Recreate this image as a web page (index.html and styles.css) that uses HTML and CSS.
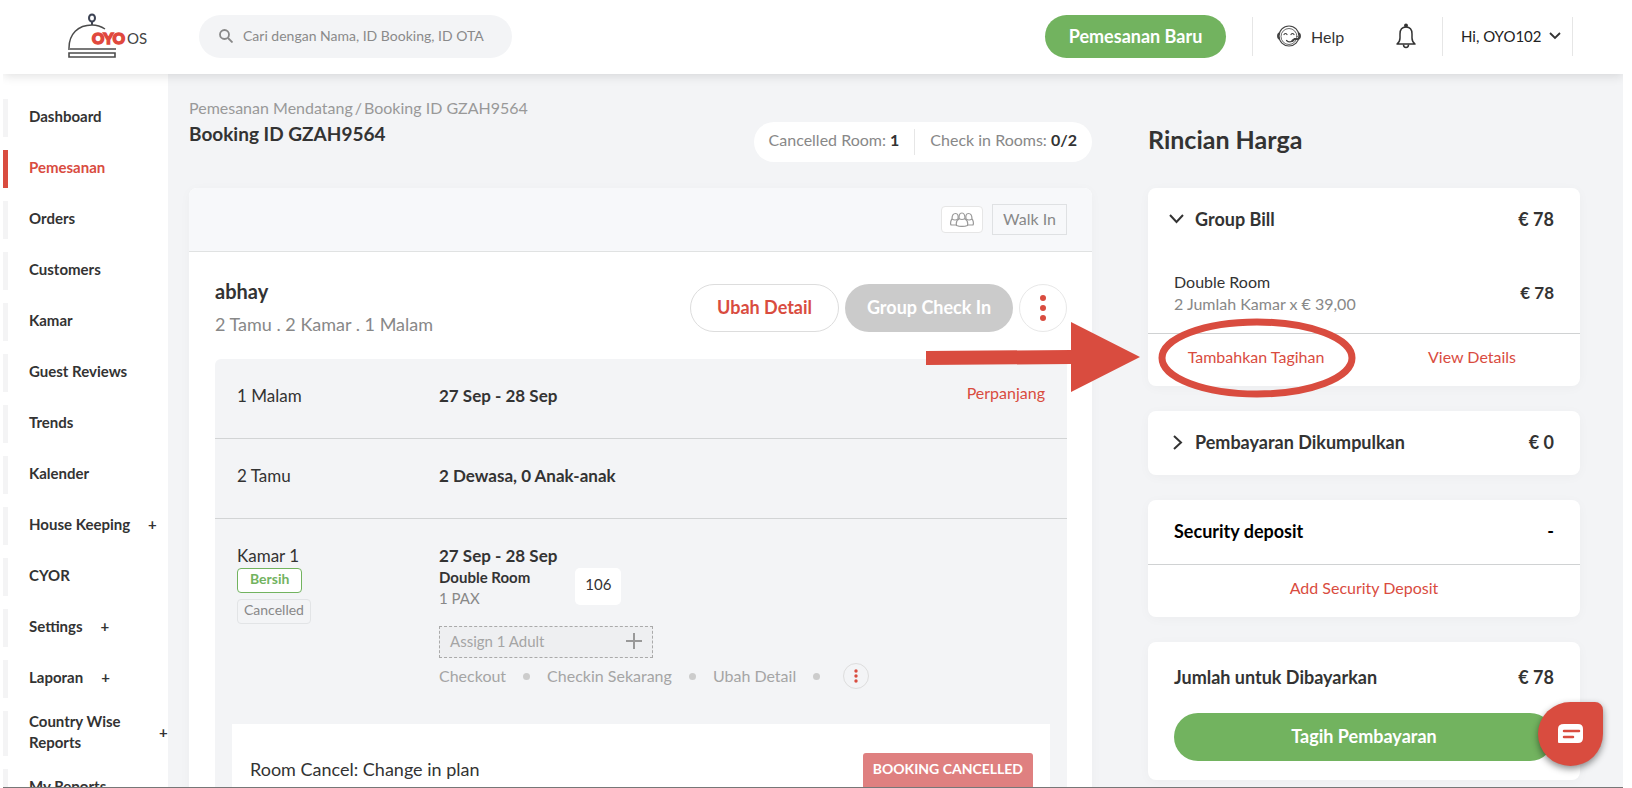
FILE: index.html
```html
<!DOCTYPE html>
<html lang="id">
<head>
  <meta charset="UTF-8" />
  <meta name="viewport" content="width=device-width, initial-scale=1" />
  <title>OYO OS - Booking ID GZAH9564</title>
  <link rel="stylesheet" href="styles.css">
</head>
<body>
  <div class="app">
    <header class="topbar">
      <a class="logo" href="#" aria-label="OYO OS">
        <svg width="84" height="48" viewBox="0 0 84 48" fill="none">
          <ellipse cx="25" cy="6" rx="3" ry="3.500" stroke="#3d4354" stroke-width="2" />
          <path d="M25 10v3" stroke="#3d4354" stroke-width="2" />
          <path d="M2 36C2 22 11 13 25 13c6 0 10 2 13 4" stroke="#4b4b4b" stroke-width="1.500" />
          <path d="M1 37h48" stroke="#4b4b4b" stroke-width="1.500" />
          <path d="M2 41h46v4H2z" stroke="#4b4b4b" stroke-width="1.600" />
          <text class="logo-oyo" x="25" y="32">OYO</text>
          <text class="logo-os" x="60" y="32">OS</text>
        </svg>
      </a>
      <form class="search">
        <svg width="14" height="14" viewBox="0 0 14 14" fill="none" stroke="#888" stroke-width="1.800">
          <circle cx="5.500" cy="5.500" r="4.500" />
          <path d="M9 9l4.500 4.500" />
        </svg>
        <input type="text" aria-label="Cari" placeholder="Cari dengan Nama, ID Booking, ID OTA" />
      </form>
      <button type="button" class="btn btn-new">Pemesanan Baru</button>
      <a class="help" href="#">
        <svg width="24" height="24" viewBox="0 0 24 24" fill="none" stroke="#444" stroke-width="1.200" stroke-linecap="round">
          <circle cx="12" cy="12" r="10" />
          <circle cx="12" cy="12.500" r="8" stroke-width=".8" />
          <path d="M2 9.500c-1.300 1-1.300 4 0 5M22 9.500c1.300 1 1.300 4 0 5" stroke-width="2" />
          <path d="M7 10.500q1.500-2 3 0M14 10.500q1.500-2 3 0" />
          <path d="M9.500 16.500c2 2 5 2 6-.5" />
          <path d="M20.500 15h-3l-2 2" stroke-width="1.800" />
        </svg>
        <span>Help</span>
      </a>
      <button type="button" class="bell" aria-label="Notifications">
        <svg width="20" height="26" viewBox="0 0 20 26" fill="none" stroke="#333" stroke-width="1.500" stroke-linejoin="round">
          <path d="M1 21c2-1.500 3-3 3-6v-4c0-4 2-7 6-7s6 3 6 7v4c0 3 1 4.500 3 6z" />
          <path d="M7.500 21.500c0 4 5 4 5 0" />
          <circle cx="10" cy="2.500" r="1.200" fill="#333" />
        </svg>
      </button>
      <button type="button" class="user">
        Hi, OYO102
        <svg width="12" height="8" viewBox="0 0 12 8" fill="none" stroke="#333" stroke-width="1.800"><path d="M1 1l5 5 5-5" /></svg>
      </button>
    </header>

    <div class="shell">
      <nav class="sidebar">
        <a href="#">Dashboard</a>
        <a href="#" class="active">Pemesanan</a>
        <a href="#">Orders</a>
        <a href="#">Customers</a>
        <a href="#">Kamar</a>
        <a href="#">Guest Reviews</a>
        <a href="#">Trends</a>
        <a href="#">Kalender</a>
        <a href="#">House Keeping <span>+</span></a>
        <a href="#">CYOR</a>
        <a href="#">Settings <span>+</span></a>
        <a href="#">Laporan <span>+</span></a>
        <a href="#"><span class="wrap">Country Wise Reports</span> <span>+</span></a>
        <a href="#">My Reports</a>
      </nav>

      <main class="content">
        <section class="booking">
          <div class="booking-head">
            <div>
              <div class="crumbs"><a href="#">Pemesanan Mendatang</a>/<span>Booking ID GZAH9564</span></div>
              <h1>Booking ID GZAH9564</h1>
            </div>
            <div class="counts">
              <span>Cancelled Room: <b>1</b></span>
              <span>Check in Rooms: <b>0/2</b></span>
            </div>
          </div>

          <div class="card">
            <div class="card-top">
              <span class="group-icon">
                <svg width="26" height="15" viewBox="0 0 26 15" fill="none" stroke="#999" stroke-width="1.200">
                  <path d="M7 13H2c-1-2 0-5 1-6 0-3 1-5.500 3.500-5.500S9.500 4 9 7" />
                  <path d="M19 13h5c1-2 0-5-1-6 0-3-1-5.500-3.500-5.500S16.500 4 17 7" />
                  <path d="M10 7c0-3 0-6 3-6s3 3 3 6c2 1 3 4 2.500 6.500-3 1-8 1-11 0C7 11 8 8 10 7z" />
                  <path d="M10 6.500q3 2 6 0M3 7q3 2 6 0M17 7q3 2 6 0" />
                </svg>
              </span>
              <span class="source">Walk In</span>
            </div>

            <div class="card-body">
              <div class="guest">
                <div>
                  <h2>abhay</h2>
                  <p>2 Tamu . 2 Kamar . 1 Malam</p>
                </div>
                <div class="guest-actions">
                  <button type="button" class="btn btn-outline">Ubah Detail</button>
                  <button type="button" class="btn btn-disabled" disabled>Group Check In</button>
                  <button type="button" class="more" aria-label="More">
                    <svg width="6" height="26" viewBox="0 0 6 26" fill="#d94c3f"><circle cx="3" cy="3" r="3" /><circle cx="3" cy="13" r="3" /><circle cx="3" cy="23" r="3" /></svg>
                  </button>
                </div>
              </div>

              <div class="details">
                <div class="row">
                  <span>1 Malam</span>
                  <b>27 Sep - 28 Sep</b>
                  <a href="#" class="extend">Perpanjang</a>
                </div>
                <div class="row">
                  <span>2 Tamu</span>
                  <b>2 Dewasa, 0 Anak-anak</b>
                </div>
                <div class="room">
                  <div class="room-status">
                    <span>Kamar 1</span>
                    <span class="tag tag-clean">Bersih</span>
                    <span class="tag">Cancelled</span>
                  </div>
                  <div>
                    <b>27 Sep - 28 Sep</b>
                    <div class="room-type">
                      <div>
                        <b>Double Room</b>
                        <p>1 PAX</p>
                      </div>
                      <span class="room-no">106</span>
                    </div>
                    <button type="button" class="assign">
                      Assign 1 Adult
                      <svg width="16" height="16" viewBox="0 0 16 16" stroke="#999" stroke-width="2"><path d="M8 0v16M0 8h16" /></svg>
                    </button>
                    <div class="room-links">
                      <a href="#">Checkout</a>
                      <i></i>
                      <a href="#">Checkin Sekarang</a>
                      <i></i>
                      <a href="#">Ubah Detail</a>
                      <i></i>
                      <button type="button" class="more more-small" aria-label="More">
                        <svg width="4" height="14" viewBox="0 0 4 14" fill="#d94c3f"><circle cx="2" cy="2" r="1.700" /><circle cx="2" cy="7" r="1.700" /><circle cx="2" cy="12" r="1.700" /></svg>
                      </button>
                    </div>
                  </div>
                </div>
                <div class="cancel">
                  <span>Room Cancel: Change in plan</span>
                  <span class="cancel-tag">BOOKING CANCELLED</span>
                </div>
              </div>
            </div>
          </div>
        </section>

        <aside class="price">
          <h2>Rincian Harga</h2>

          <div class="card">
            <div class="price-row">
              <svg class="chev" width="15" height="10" viewBox="0 0 15 10" fill="none" stroke="#333" stroke-width="2"><path d="M1 1l6.500 7L14 1" /></svg>
              <b>Group Bill</b>
              <b class="amount">€ 78</b>
            </div>
            <div class="bill-item">
              <div>
                <div>Double Room</div>
                <p>2 Jumlah Kamar x € 39,00</p>
              </div>
              <b>€ 78</b>
            </div>
            <div class="card-actions">
              <div class="marked">
                <a href="#">Tambahkan Tagihan</a>
                <svg class="pointer" width="432" height="84" viewBox="0 0 432 84">
                  <path d="M0 35l145-1V6l69 35-69 35V48L0 49z" fill="#d94c3f" />
                  <ellipse cx="331" cy="42" rx="95" ry="36" fill="none" stroke="#d94c3f" stroke-width="7" />
                </svg>
              </div>
              <a href="#">View Details</a>
            </div>
          </div>

          <div class="card">
            <div class="price-row">
              <svg class="chev" width="15" height="15" viewBox="0 0 15 15" fill="none" stroke="#333" stroke-width="2"><path d="M5 1l7 6.500L5 14" /></svg>
              <b>Pembayaran Dikumpulkan</b>
              <b class="amount">€ 0</b>
            </div>
          </div>

          <div class="card">
            <div class="price-row deposit">
              <b>Security deposit</b>
              <b class="amount">-</b>
            </div>
            <div class="card-actions">
              <a href="#">Add Security Deposit</a>
            </div>
          </div>

          <div class="card pay">
            <div class="price-row">
              <b>Jumlah untuk Dibayarkan</b>
              <b class="amount">€ 78</b>
            </div>
            <button type="button" class="btn btn-pay">Tagih Pembayaran</button>
          </div>
        </aside>
      </main>
    </div>

    <button type="button" class="chat" aria-label="Chat">
      <svg width="26" height="20" viewBox="0 0 26 20">
        <path d="M6 0h14q5 0 5 5v9q0 5-5 5H1q-1 0-1-1V5q0-5 6-5z" fill="#fff" />
        <path d="M6 7h15M6 13h9" stroke="#d94c3f" stroke-width="2.500" stroke-linecap="round" />
      </svg>
    </button>
  </div>
</body>
</html>
```
FILE: styles.css
```css
* { box-sizing: border-box; }
body { margin: 0; font-family: Lato, "Open Sans", sans-serif; font-size: 16px; color: #333; background: #fff; }
h1, h2, p { margin: 0; }
a { color: inherit; text-decoration: none; }
button { font: inherit; color: inherit; padding: 0; border: none; background: none; cursor: pointer; }
svg { display: block; flex: none; }

.app { height: 100vh; margin: 0 9px 0 3px; overflow: hidden; display: flex; flex-direction: column; border-bottom: 1px solid #777; }

/* top bar */
.topbar { position: relative; z-index: 1; flex: none; height: 74px; padding: 0 50px 2px 64px; display: flex; align-items: center; background: #fff; box-shadow: 0 2px 10px rgba(0, 0, 0, 0.12); }
.logo { width: 132px; }
.logo-oyo { font-size: 15px; font-weight: 900; fill: #e0483d; stroke: #e0483d; stroke-width: 1.5; }
.logo-os { font-size: 15px; fill: #444; }
.search { width: 313px; height: 43px; padding: 0 20px; display: flex; align-items: center; gap: 10px; border-radius: 22px; background: #f3f4f6; }
.search input { flex: 1; min-width: 0; padding: 0 0 2px; border: none; outline: none; background: none; font: inherit; font-size: 14px; }
.search input::placeholder { color: #8a8a8a; }
.btn { height: 48px; padding-bottom: 3px; border-radius: 24px; font-size: 18px; font-weight: 700; }
.btn-new { width: 181px; height: 43px; padding-bottom: 1px; margin-left: auto; margin-right: 26px; background: #72b35f; color: #fff; }
.help { height: 39px; width: 124px; padding-left: 24px; display: flex; align-items: center; gap: 10px; border-left: 1px solid #e6e6e6; }
.bell { width: 66px; padding-left: 20px; }
.user { width: 131px; height: 39px; padding: 0 11px 0 18px; display: flex; align-items: center; justify-content: space-between; border: solid #e6e6e6; border-width: 0 1px; color: #222; font-size: 15px; }

/* sidebar */
.shell { flex: 1; min-height: 0; display: flex; background: #f3f4f6; }
.sidebar { flex: none; width: 165px; padding-top: 25px; display: flex; flex-direction: column; gap: 13px; background: #fff; }
.sidebar a { flex: none; min-height: 38px; padding: 0 0 3px 21px; display: flex; align-items: center; gap: 18px; border-left: 5px solid #f4f4f5; font-size: 15px; line-height: 21px; font-weight: 700; }
.sidebar .active { border-color: #d94c3f; color: #d94c3f; }
.wrap { width: 112px; }

/* booking */
.content { flex: 1; min-width: 0; padding: 23px 43px 0 21px; display: grid; grid-template-columns: minmax(0, 1fr) 432px; column-gap: 56px; }
.booking-head { height: 91px; display: flex; justify-content: space-between; align-items: flex-start; }
.crumbs { display: flex; gap: 2px; font-size: 16px; line-height: 22px; color: #999; }
h1 { font-size: 19px; line-height: 30px; }
.counts { height: 40px; margin-top: 25px; padding: 7px 0; display: flex; border-radius: 20px; background: #fff; color: #888; }
.counts span { padding: 0 15px; line-height: 22px; }
.counts span + span { border-left: 1px solid #e6e6e6; }
.counts b { color: #333; }
.card { border-radius: 8px; background: #fff; box-shadow: 0 2px 12px rgba(0, 0, 0, 0.03); }
.card-top { height: 64px; padding: 0 25px; display: flex; justify-content: flex-end; align-items: center; gap: 9px; border-bottom: 1px solid #e0e2e2; border-radius: 8px 8px 0 0; background: #f7f8fa; }
.group-icon { padding: 5px 7px; border: 1px solid #e6e6e6; border-radius: 4px; background: #fff; }
.source { height: 31px; padding: 0 10px; border: 1px solid #dfe1e3; line-height: 27px; color: #888; }
.card-body { padding: 32px 25px 0 26px; }
.guest { height: 75px; display: flex; justify-content: space-between; }
.guest h2 { font-size: 20px; line-height: 14px; }
.guest p { margin-top: 16px; font-size: 18px; line-height: 20px; color: #888; }
.guest-actions { display: flex; gap: 6px; }
.btn-outline { width: 149px; border: 1px solid #ddd; background: #fff; color: #d94c3f; }
.btn-disabled { width: 168px; background: #cbcbcb; color: #fff; }
.more { flex: none; width: 48px; height: 48px; display: flex; justify-content: center; align-items: center; border: 1px solid #e8e8e8; border-radius: 50%; }
.details { border-radius: 6px 6px 0 0; background: #f3f4f6; font-size: 17px; }
.row { height: 80px; padding: 0 22px 6px; display: grid; grid-template-columns: 202px 1fr auto; align-items: center; border-bottom: 1px solid #d2d4d5; }
.extend, .card-actions a { font-size: 16px; color: #d94c3f; }
.extend { padding-bottom: 6px; }
.room { height: 205px; padding: 26px 22px 0; display: grid; grid-template-columns: 202px 1fr; line-height: 22px; }
.room-status { display: flex; flex-direction: column; align-items: flex-start; }
.tag { height: 25px; margin-top: 6px; padding: 0 6px; border: 1px solid #e2e4e6; border-radius: 4px; font-size: 14px; line-height: 20px; color: #888; }
.tag-clean { margin-top: 1px; padding: 0 12px; border-color: #72b35f; background: #fff; color: #72b35f; font-weight: 700; }
.room-type { display: flex; gap: 45px; font-size: 15px; line-height: 21px; }
.room-type p { color: #888; }
.room-no { height: 37px; margin-top: 1px; padding: 0 10px; border-radius: 5px; background: #fff; line-height: 33px; }
.assign { width: 214px; height: 32px; margin-top: 17px; padding: 0 10px 2px; display: flex; justify-content: space-between; align-items: center; border: 1px dashed #aaa; background: #eeeff1; font-size: 15px; color: #a5a5a5; }
.room-links { margin-top: 5px; display: flex; align-items: center; gap: 17px; font-size: 16px; color: #a5a5a5; }
.room-links i { width: 7px; height: 7px; border-radius: 50%; background: #ccc; }
.more-small { width: 26px; height: 26px; margin-left: 6px; border-color: #ddd; }
.cancel { height: 120px; margin: 0 17px; padding: 29px 17px 0 18px; display: flex; justify-content: space-between; background: #fff; font-size: 18px; line-height: 32px; }
.cancel-tag { height: 40px; padding: 0 10px; border-radius: 3px; background: #df8080; color: #fff; font-size: 14px; font-weight: 700; }

/* price details */
.price { display: flex; flex-direction: column; gap: 25px; line-height: 22px; }
.price h2 { height: 66px; padding-top: 28px; font-size: 25px; line-height: 28px; }
.price-row { height: 64px; padding: 0 26px 2px; display: flex; align-items: center; font-size: 18px; }
.chev { margin: 0 11px 0 -5px; }
.amount { margin-left: auto; }
.bill-item { height: 81px; padding: 0 26px; display: flex; justify-content: space-between; align-items: center; }
.bill-item p { color: #888; }
.bill-item b { font-size: 17px; }
.card-actions { height: 53px; padding-bottom: 6px; display: grid; grid-auto-flow: column; grid-auto-columns: 1fr; align-items: center; border-top: 1px solid #d0d2d3; text-align: center; }
.deposit { color: #000; }
.marked { position: relative; }
.pointer { position: absolute; left: -222px; top: -30px; pointer-events: none; }
.pay { padding-bottom: 19px; }
.pay .price-row { height: 71px; }
.btn-pay { display: block; width: calc(100% - 52px); margin: 0 26px; background: #72b35f; color: #fff; }
.chat { position: fixed; z-index: 2; right: 29px; bottom: 22px; width: 65px; height: 64px; display: flex; justify-content: center; align-items: center; border-radius: 50% 8px 50% 50%; background: #d94c3f; box-shadow: 0 3px 7px rgba(0, 0, 0, 0.45); }
```
